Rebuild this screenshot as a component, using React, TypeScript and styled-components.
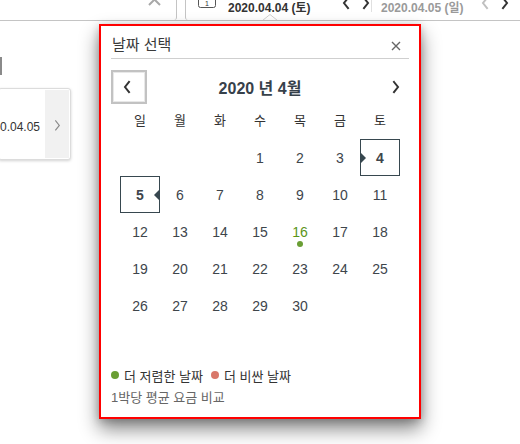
import React from "react";
import styled, { createGlobalStyle } from "styled-components";

const GlobalStyle = createGlobalStyle`
  html, body { margin: 0; padding: 0; background: #fff; }
  body { font-family: "Liberation Sans", "Noto Sans CJK KR", sans-serif; color: #333; }
  * { box-sizing: border-box; }
`;

const KR = `"Liberation Sans", "Noto Sans CJK KR", sans-serif`;

const Page = styled.div`
  position: relative;
  width: 520px;
  height: 444px;
  overflow: hidden;
  background: #fff;
`;

const TopBar = styled.div`
  display: flex;
  height: 21px;
  border-bottom: 1px solid #c4c4c4;
  overflow: hidden;
`;

const LeftField = styled.div`
  position: relative;
  width: 177px;
  height: 20px;
  border-right: 1px solid #c4c4c4;
  border-bottom-right-radius: 3px;
  display: flex;
  justify-content: flex-end;
  padding-right: 15px;
`;

const DateField = styled.div`
  position: relative;
  margin-left: 8px;
  width: 186px;
  height: 20px;
  border-left: 1px solid #c4c4c4;
  border-bottom-left-radius: 3px;
  display: flex;
  align-items: flex-start;
  padding-left: 11px;
`;

const Notch = styled.svg`
  position: absolute;
  left: 76px;
  bottom: -1px;
`;

const DateText = styled.span<{ $muted?: boolean }>`
  font-family: ${KR};
  font-weight: bold;
  font-size: 12px;
  line-height: 16px;
  color: ${(p) => (p.$muted ? "#9a9a9a" : "#333")};
  white-space: nowrap;
`;

const CalIcon = styled.svg`
  margin-top: -3px;
  margin-right: 11px;
  flex: none;
`;

const Arrows = styled.div<{ $gap: number }>`
  display: flex;
  gap: ${(p) => p.$gap}px;
  margin-left: auto;
  margin-top: -3px;
`;

const SecondField = styled.div`
  flex: 1;
  height: 20px;
  display: flex;
  align-items: flex-start;
  padding-left: 9px;
  padding-right: 10px;
`;

const Divider = styled.div`
  width: 1px;
  height: 12px;
  background: #e0e0e0;
`;

const Main = styled.div`
  padding-top: 36px;
`;

const SideBar = styled.div`
  width: 2px;
  height: 18px;
  background: #8a8a8a;
`;

const Card = styled.div`
  margin-top: 13px;
  margin-left: -2px;
  width: 73px;
  height: 72px;
  display: flex;
  border: 1px solid #dcdcdc;
  border-radius: 3px;
  box-shadow: 0 1px 3px rgba(0, 0, 0, 0.18);
  background: #fff;
  overflow: hidden;
`;

const CardText = styled.div`
  flex: 1;
  display: flex;
  align-items: center;
  padding-left: 1px;
  padding-top: 6px;
  font-size: 12px;
  color: #333;
  white-space: nowrap;
`;

const CardSide = styled.div`
  width: 24px;
  margin: 1px 1px 1px 0;
  background: #f1f1f1;
  display: flex;
  align-items: center;
  justify-content: center;
  padding-top: 2px;
`;

const Popup = styled.div`
  position: absolute;
  left: 99px;
  top: 24px;
  width: 322px;
  height: 395px;
  border: 2px solid #ff0000;
  background: #fff;
  box-shadow: 0 10px 18px rgba(0, 0, 0, 0.48), 0 2px 8px rgba(0, 0, 0, 0.2);
  display: flex;
  flex-direction: column;
`;

const Header = styled.div`
  margin: 0 10px;
  height: 33px;
  padding-top: 8px;
  border-bottom: 1px solid #cfcfcf;
  display: flex;
  justify-content: space-between;
  align-items: flex-start;
`;

const Title = styled.h2`
  margin: 0 0 0 1px;
  font-family: ${KR};
  font-weight: normal;
  font-size: 15px;
  line-height: 22px;
  color: #3a3a3a;
`;

const CloseBtn = styled.button`
  border: 0;
  background: none;
  padding: 0;
  width: 22px;
  height: 22px;
  display: flex;
  align-items: center;
  justify-content: center;
  margin-top: 1px;
  margin-right: 2px;
`;

const Nav = styled.div`
  margin: 11px 10px 0;
  height: 34px;
  display: grid;
  grid-template-columns: 36px 1fr 36px;
  align-items: center;
`;

const PrevBtn = styled.button`
  width: 36px;
  height: 34px;
  border: 2px solid #c2c2c2;
  box-shadow: inset 0 0 0 1px #e8e8e8;
  background: #fff;
  padding: 0 4px 0 0;
  display: flex;
  align-items: center;
  justify-content: center;
`;

const NextBtn = styled.button`
  height: 34px;
  border: 0;
  background: none;
  padding: 0 8px 0 0;
  display: flex;
  align-items: center;
  justify-content: flex-end;
`;

const MonthTitle = styled.div`
  text-align: center;
  font-family: ${KR};
  font-weight: bold;
  font-size: 16px;
  color: #37414a;
`;

const WeekRow = styled.div`
  margin: 6px auto 0;
  width: 280px;
  display: grid;
  grid-template-columns: repeat(7, 40px);
  height: 22px;
`;

const WeekDay = styled.div`
  text-align: center;
  font-family: ${KR};
  font-size: 13px;
  line-height: 22px;
  color: #333;
`;

const DaysGrid = styled.div`
  margin: 7px auto 0;
  width: 280px;
  display: grid;
  grid-template-columns: repeat(7, 40px);
  grid-auto-rows: 37px;
`;

const Day = styled.div<{ $selected?: boolean; $cheap?: boolean }>`
  position: relative;
  display: flex;
  align-items: center;
  justify-content: center;
  font-size: 14px;
  font-weight: ${(p) => (p.$selected ? "bold" : "normal")};
  color: ${(p) => (p.$cheap ? "#5b9418" : "#3e454b")};
  border: ${(p) => (p.$selected ? "1px solid #37474f" : "1px solid transparent")};
`;

const Marker = styled.span<{ $side: "left" | "right" }>`
  position: absolute;
  top: 50%;
  margin-top: -5px;
  width: 0;
  height: 0;
  border-top: 5px solid transparent;
  border-bottom: 5px solid transparent;
  ${(p) =>
    p.$side === "left"
      ? "left: 0; border-left: 5px solid #37474f;"
      : "right: 0; border-right: 5px solid #37474f;"}
`;

const Dot = styled.span<{ $color: string; $size: number }>`
  display: inline-block;
  width: ${(p) => p.$size}px;
  height: ${(p) => p.$size}px;
  border-radius: 50%;
  background: ${(p) => p.$color};
  flex: none;
`;

const CheapDot = styled(Dot)`
  position: absolute;
  left: 50%;
  bottom: 2px;
  margin-left: -3px;
`;

const Legend = styled.div`
  margin: 42px 10px 0;
  display: flex;
  align-items: center;
  height: 18px;
  font-family: ${KR};
  font-size: 13px;
  color: #333;
`;

const LegendItem = styled.span`
  display: inline-flex;
  align-items: center;
  gap: 5px;
  margin-right: 8px;
`;

const Note = styled.div`
  margin: 5px 10px 0;
  height: 18px;
  line-height: 18px;
  font-family: ${KR};
  font-size: 13px;
  color: #666;
`;

const Chevron = ({ dir, color = "#333", size = 10, sw = 2 }: { dir: "left" | "right" | "up"; color?: string; size?: number; sw?: number }) => {
  const d =
    dir === "left" ? "M7 1 L3 6 L7 11" : dir === "right" ? "M3 1 L7 6 L3 11" : "M1 7 L6 3 L11 7";
  return (
    <svg width={size} height={size * 1.2} viewBox="0 0 10 12" fill="none" style={{ overflow: "visible" }}>
      <path d={d} stroke={color} strokeWidth={sw} strokeLinecap="square" strokeLinejoin="miter" />
    </svg>
  );
};

type Cell = { n?: number; sel?: "start" | "end"; cheap?: boolean };

const buildDays = (): Cell[] => {
  const cells: Cell[] = [];
  for (let i = 0; i < 3; i++) cells.push({});
  for (let d = 1; d <= 30; d++) {
    cells.push({ n: d, sel: d === 4 ? "start" : d === 5 ? "end" : undefined, cheap: d === 16 });
  }
  return cells;
};

const weekdays = ["일", "월", "화", "수", "목", "금", "토"];

export default function App() {
  const days = buildDays();
  return (
    <Page>
      <GlobalStyle />
      <TopBar>
        <LeftField>
          <svg width="13" height="8" viewBox="0 0 13 8" style={{ marginTop: -2 }}>
            <path d="M1 7 L6.5 1.5 L12 7" fill="none" stroke="#a8a8a8" strokeWidth="2" />
          </svg>
        </LeftField>
        <DateField>
          <CalIcon width="20" height="12" viewBox="0 0 20 12">
            <rect x="1.5" y="-4" width="17" height="14.5" rx="2" fill="none" stroke="#555" strokeWidth="1" />
            <text x="10" y="8.5" fontSize="7" fontFamily="Liberation Sans" textAnchor="middle" fill="#333">1</text>
          </CalIcon>
          <DateText>2020.04.04 (토)</DateText>
          <Arrows $gap={10}>
            <Chevron dir="left" color="#333" />
            <Chevron dir="right" color="#333" />
          </Arrows>
          <Notch width="16" height="7" viewBox="0 0 16 7">
            <path d="M0 7 L8 0.5 L16 7 Z" fill="#fff" />
            <path d="M0.5 6.5 L8 0.5 L15.5 6.5" fill="none" stroke="#d0d0d0" strokeWidth="1" />
          </Notch>
        </DateField>
        <Divider />
        <SecondField>
          <DateText $muted>2020.04.05 (일)</DateText>
          <Arrows $gap={10}>
            <Chevron dir="left" color="#c0c0c0" />
            <Chevron dir="right" color="#333" />
          </Arrows>
        </SecondField>
      </TopBar>

      <Main>
        <SideBar />
        <Card>
          <CardText>0.04.05</CardText>
          <CardSide>
            <Chevron dir="right" color="#8a8a8a" size={9} sw={1.3} />
          </CardSide>
        </Card>
      </Main>

      <Popup>
        <Header>
          <Title>날짜 선택</Title>
          <CloseBtn aria-label="close">
            <svg width="10" height="10" viewBox="0 0 10 10">
              <path d="M1 1 L9 9 M9 1 L1 9" stroke="#666" strokeWidth="1.4" />
            </svg>
          </CloseBtn>
        </Header>
        <Nav>
          <PrevBtn aria-label="prev">
            <Chevron dir="left" color="#333" size={10} sw={2} />
          </PrevBtn>
          <MonthTitle>2020 년 4월</MonthTitle>
          <NextBtn aria-label="next">
            <Chevron dir="right" color="#333" size={10} sw={2} />
          </NextBtn>
        </Nav>
        <WeekRow>
          {weekdays.map((w) => (
            <WeekDay key={w}>{w}</WeekDay>
          ))}
        </WeekRow>
        <DaysGrid>
          {days.map((c, i) => (
            <Day key={i} $selected={!!c.sel} $cheap={c.cheap}>
              {c.n}
              {c.sel === "start" && <Marker $side="left" />}
              {c.sel === "end" && <Marker $side="right" />}
              {c.cheap && <CheapDot $color="#6a9e34" $size={6} />}
            </Day>
          ))}
        </DaysGrid>
        <Legend>
          <LegendItem>
            <Dot $color="#6a9e34" $size={8} />더 저렴한 날짜
          </LegendItem>
          <LegendItem>
            <Dot $color="#d9786a" $size={8} />더 비싼 날짜
          </LegendItem>
        </Legend>
        <Note>1박당 평균 요금 비교</Note>
      </Popup>
    </Page>
  );
}
